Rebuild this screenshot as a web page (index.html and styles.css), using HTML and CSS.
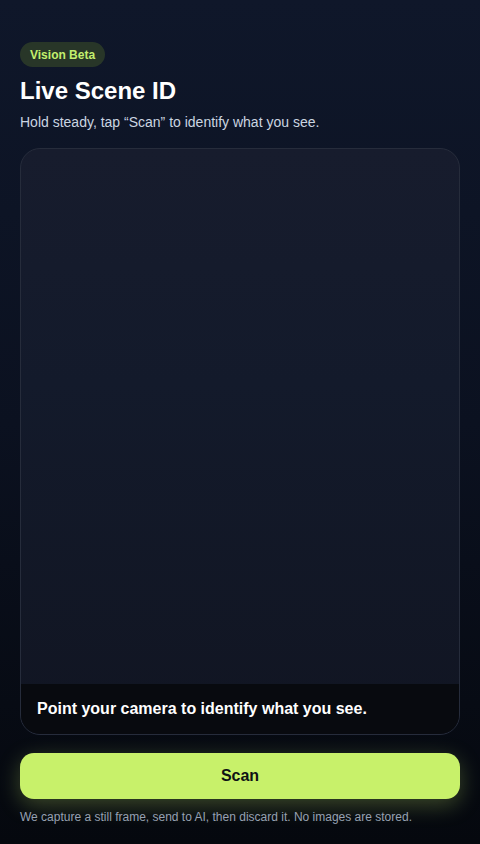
FILE: index.html
```html
<!DOCTYPE html>
<html lang="en">
<head>
<meta charset="utf-8">
<title>Live Scene ID</title>
<link rel="stylesheet" href="styles.css">
</head>
<body>
<main class="app">
  <header class="head">
    <span class="badge">Vision Beta</span>
    <h1 class="title">Live Scene ID</h1>
    <p class="subtitle">Hold steady, tap “Scan” to identify what you see.</p>
  </header>
  <section class="viewer">
    <div class="feed"></div>
    <div class="caption">Point your camera to identify what you see.</div>
  </section>
  <button class="scan" type="button">Scan</button>
  <p class="note">We capture a still frame, send to AI, then discard it. No images are stored.</p>
</main>
</body>
</html>
```
FILE: styles.css
```css
* { box-sizing: border-box; }
html, body { margin: 0; height: 100%; }
body {
  font-family: "Liberation Sans", Arial, sans-serif;
  background: linear-gradient(180deg, #0f172a 0%, #0b1120 50%, #05080e 100%);
  color: #f1f5f9;
}
.app {
  height: 844px;
  padding: 42px 20px 20px;
  display: flex;
  flex-direction: column;
}
.head { display: flex; flex-direction: column; align-items: flex-start; }
.badge {
  display: inline-flex;
  align-items: center;
  height: 25px;
  padding: 0 10px;
  border-radius: 13px;
  background: #283628;
  color: #c3ef6e;
  font-size: 12px;
  font-weight: 700;
}
.title {
  margin: 10px 0 0;
  font-size: 24px;
  line-height: 28px;
  font-weight: 700;
  color: #ffffff;
}
.subtitle {
  margin: 8px 0 0;
  font-size: 14px;
  line-height: 18px;
  color: #cbd5e1;
}
.viewer {
  margin-top: 17px;
  height: 587px;
  border: 1px solid #262c3b;
  border-radius: 20px;
  overflow: hidden;
  display: flex;
  flex-direction: column;
  background: linear-gradient(180deg, #171c2d 0%, #131a2b 40%, #111522 100%);
}
.feed { flex: 1; }
.caption {
  height: 50px;
  padding: 0 16px;
  display: flex;
  align-items: center;
  background: #080a0f;
  color: #ffffff;
  font-size: 16px;
  font-weight: 700;
}
.scan {
  margin-top: 18px;
  height: 46px;
  border: 0;
  border-radius: 14px;
  background: #c8f16a;
  color: #0f1115;
  font-family: inherit;
  font-size: 16px;
  font-weight: 700;
  box-shadow: 0 6px 22px rgba(200, 241, 106, 0.28);
}
.note {
  margin: 11px 0 0;
  font-size: 12px;
  line-height: 14px;
  color: #97a1b2;
}
```
